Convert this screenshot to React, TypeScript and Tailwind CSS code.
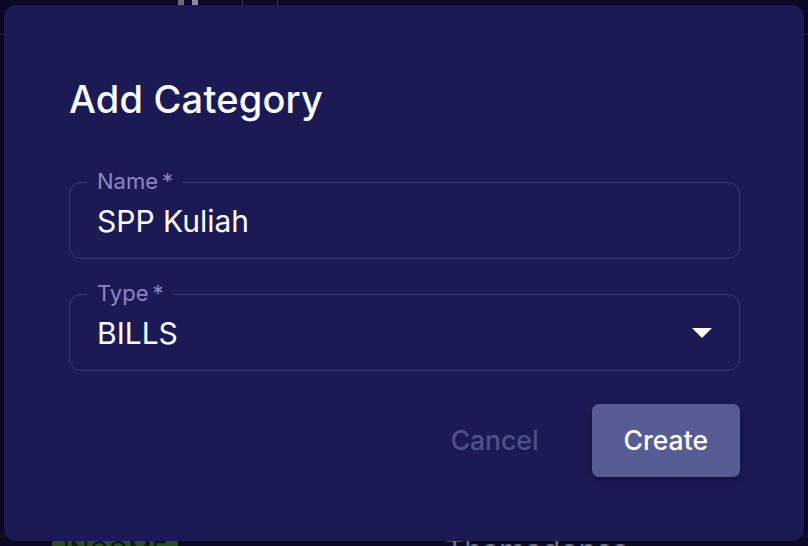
const font = { fontFamily: 'Inter, "Noto Sans", sans-serif' }

function OutlinedField({ label, value, select }: { label: string; value: string; select?: boolean }) {
  return (
    <div className="relative h-[77px] rounded-[12px] border border-[#3b3a78] flex items-center pl-[27px] pr-[27px]">
      <span className="absolute left-[17px] top-[-14px] px-[10px] bg-[#1c1a55] text-[22px] leading-[24px] text-[#8986c2]">
        {label}
        <span className="ml-[4px]">*</span>
      </span>
      <span className="flex-1 text-[30px] leading-[36px] text-white">{value}</span>
      {select && (
        <svg width="20" height="10" viewBox="0 0 20 10">
          <path d="M0 0h20L10 10z" fill="#ffffff" />
        </svg>
      )}
    </div>
  )
}

export default function App() {
  return (
    <div className="relative w-[808px] h-[546px] overflow-hidden bg-[#0b0a25]" style={font}>

      {/* page behind the backdrop */}
      <div className="flex flex-col h-full">
        <div className="mt-[-24px] h-[59px] border-b border-[#2a2940] flex items-start">
          <div className="ml-[178px] mt-[4px] flex items-center gap-[8px]">
            <div className="w-[6px] h-[26px] bg-[#6d6c7c]" />
            <div className="w-[6px] h-[26px] bg-[#8c8b98]" />
          </div>
          <div className="ml-[44px] mt-[2px] h-[30px] w-px bg-[#3a3950]" />
          <div className="ml-[34px] mt-[2px] h-[30px] w-px bg-[#3a3950]" />
          <span className="ml-[22px] mt-[-3px] text-[30px] leading-[30px] text-[#6f6e82]">Created At</span>
        </div>
        <div className="flex-1" />
        <div className="h-[16px] flex items-start">
          <div className="ml-[52px] mt-[10px] w-[126px] h-[24px] rounded-[4px] bg-[#2c4a2a] flex justify-center">
            <span className="text-[26px] leading-[26px] text-[#0f170f] mt-[-2px]">INCOME</span>
          </div>
          <span className="ml-[267px] mt-[5px] text-[30px] leading-[30px] text-[#6f6e82]">Thamadonsa</span>
        </div>
      </div>

      {/* dialog */}
      <div className="absolute left-[4px] top-[5px] w-[800px] h-[536px] rounded-[12px] bg-[#1c1a55] pt-[72px] pl-[65px] pr-[64px] flex flex-col">
        <h2 className="text-[38px] leading-[45px] font-medium text-white tracking-[0.2px]">Add Category</h2>

        <div className="mt-[60px] flex flex-col gap-[35px]">
          <OutlinedField label="Name" value="SPP Kuliah" />
          <OutlinedField label="Type" value="BILLS" select />
        </div>

        <div className="mt-[33px] flex justify-end gap-[15px]">
          <button className="h-[73px] px-[38px] text-[26.5px] font-medium text-[#4d5289]">Cancel</button>
          <button className="h-[73px] px-[32px] rounded-[7px] bg-[#575d94] text-[26.5px] font-medium text-white shadow-[0_3px_6px_rgba(0,0,0,0.35)]">
            Create
          </button>
        </div>
      </div>
    </div>
  )
}
